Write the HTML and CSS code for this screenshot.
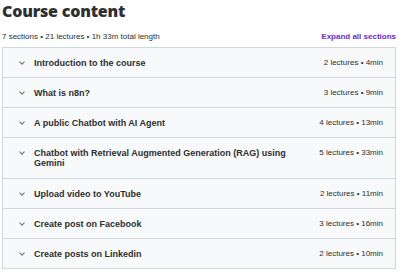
FILE: index.html
```html
<!DOCTYPE html>
<html lang="en">
<head>
  <meta charset="UTF-8">
  <meta name="viewport" content="width=device-width, initial-scale=1.0">
  <title>Course content</title>
  <link rel="stylesheet" href="styles.css">
</head>
<body>
  <h2 class="title">Course content</h2>

  <!-- Summary bar -->
  <div class="summary">
    <span>7 sections • 21 lectures • 1h 33m total length</span>
    <button class="expand">Expand all sections</button>
  </div>

  <!-- Sections -->
  <div class="sections">
    <div class="section">
      <span class="chevron"></span>
      <span class="name">Introduction to the course</span>
      <span class="info">2 lectures • 4min</span>
    </div>
    <div class="section">
      <span class="chevron"></span>
      <span class="name">What is n8n?</span>
      <span class="info">3 lectures • 9min</span>
    </div>
    <div class="section">
      <span class="chevron"></span>
      <span class="name">A public Chatbot with AI Agent</span>
      <span class="info">4 lectures • 13min</span>
    </div>
    <div class="section tall">
      <span class="chevron"></span>
      <span class="name">Chatbot with Retrieval Augmented Generation (RAG) using Gemini</span>
      <span class="info">5 lectures • 33min</span>
    </div>
    <div class="section">
      <span class="chevron"></span>
      <span class="name">Upload video to YouTube</span>
      <span class="info">2 lectures • 11min</span>
    </div>
    <div class="section">
      <span class="chevron"></span>
      <span class="name">Create post on Facebook</span>
      <span class="info">3 lectures • 16min</span>
    </div>
    <div class="section">
      <span class="chevron"></span>
      <span class="name">Create posts on Linkedin</span>
      <span class="info">2 lectures • 10min</span>
    </div>
  </div>
</body>
</html>
```

FILE: styles.css
```css
/* General */
body {
  margin: 0;
  padding: 0 4px 0 2px;
  font-family: 'Liberation Sans', Arial, sans-serif;
  color: #2d2f31;
  background: #fff;
}

.title {
  margin: 0;
  font-family: 'Open Sans', 'Liberation Sans', sans-serif;
  font-size: 16px;
  line-height: 22px;
  font-weight: 800;
  letter-spacing: -0.2px;
}

/* Summary */
.summary {
  display: flex;
  justify-content: space-between;
  align-items: center;
  margin-top: 8px;
  height: 12px;
  font-size: 8px;
}

.expand {
  border: none;
  background: none;
  padding: 0;
  font-family: inherit;
  font-size: 8px;
  font-weight: bold;
  color: #6d28d2;
}

/* Section list */
.sections {
  margin-top: 5px;
  border: 1px solid #d1d7dc;
  border-bottom: none;
}

.section {
  display: flex;
  align-items: center;
  gap: 7px;
  padding: 10px 12px 9px 14px;
  min-height: 10px;
  background: #f7f9fa;
  border-bottom: 1px solid #d1d7dc;
  font-size: 9px;
  line-height: 10px;
}

.section.tall {
  align-items: flex-start;
  padding-bottom: 10px;
}

.chevron {
  flex: none;
  width: 3px;
  height: 3px;
  margin: 0 3px 2px 3px;
  border-right: 1px solid #6a6f73;
  border-bottom: 1px solid #6a6f73;
  transform: rotate(45deg);
}

.section.tall .chevron {
  margin-top: 2px;
}

.name {
  flex: 1;
  font-weight: bold;
  padding-right: 18px;
}

.info {
  flex: none;
  font-size: 8px;
}
```
